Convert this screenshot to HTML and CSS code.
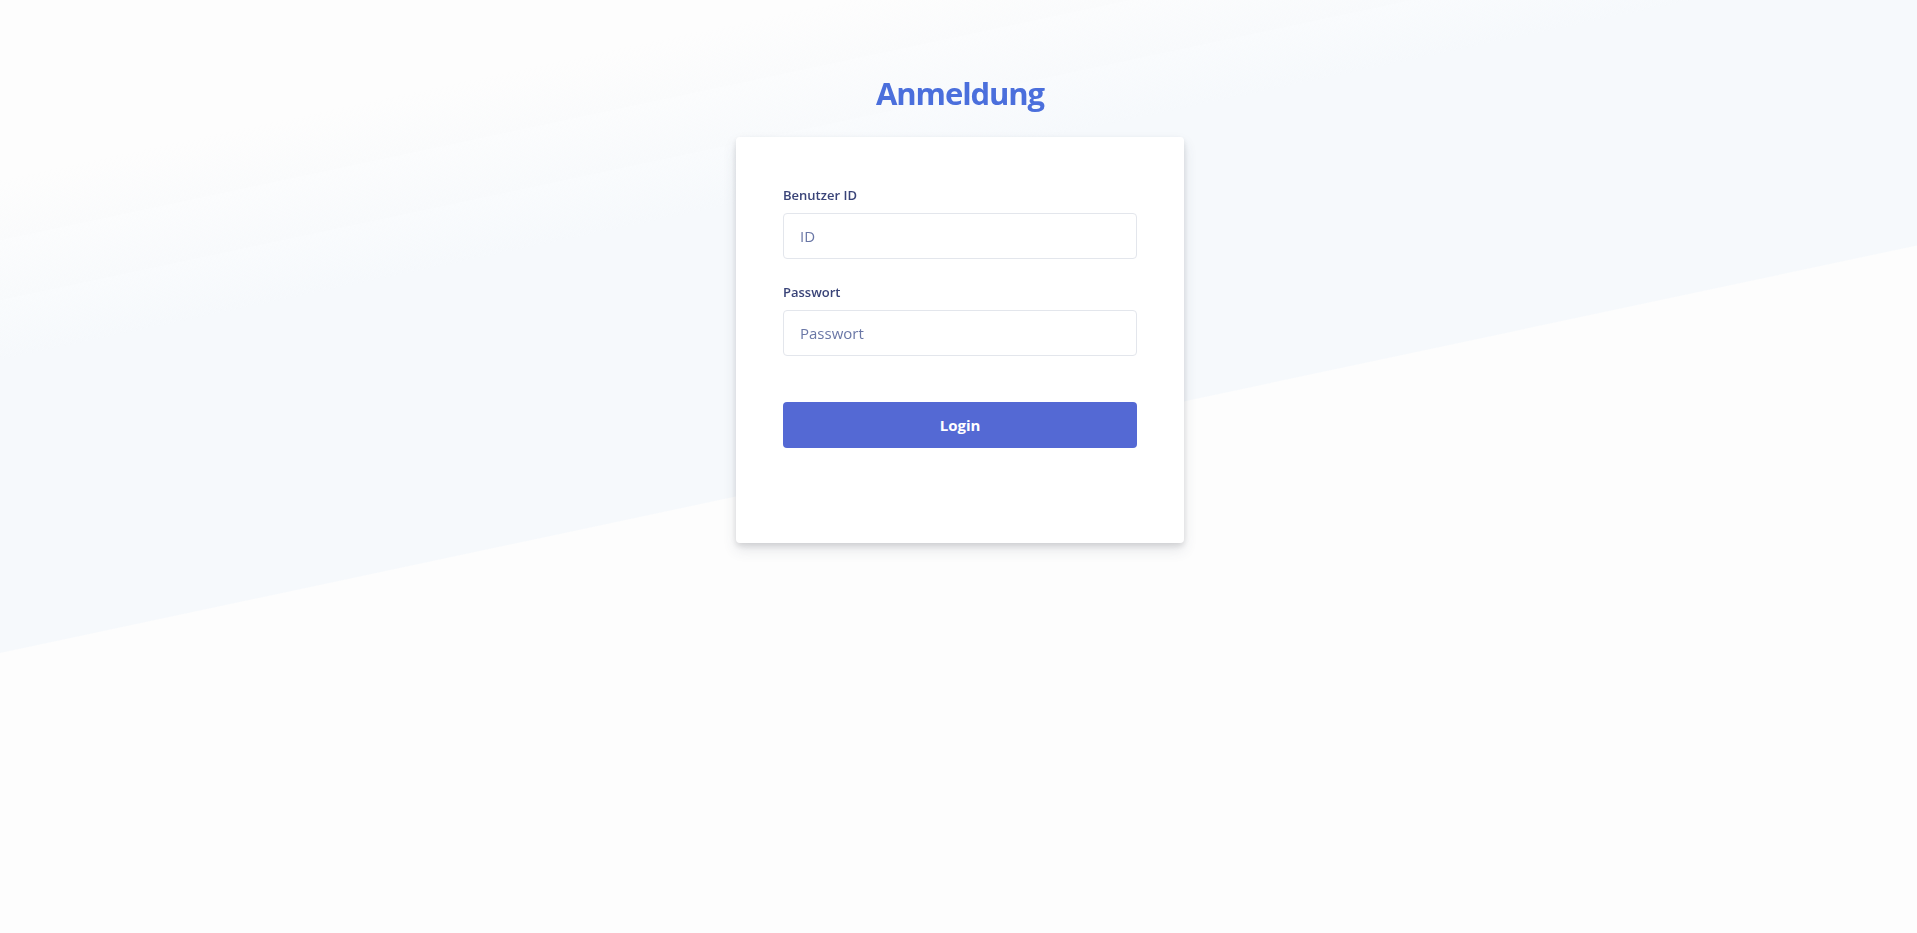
FILE: index.html
```html
<!DOCTYPE html>
<html lang="de">
<head>
<meta charset="utf-8">
<title>Anmeldung</title>
<link rel="stylesheet" href="styles.css">
</head>
<body>
<div class="bg"><div class="band"></div></div>
<main class="page">
  <h1 class="title">Anmeldung</h1>
  <form class="card">
    <div class="field">
      <label class="label" for="uid">Benutzer ID</label>
      <input class="input" id="uid" type="text" placeholder="ID">
    </div>
    <div class="field">
      <label class="label" for="pw">Passwort</label>
      <input class="input" id="pw" type="password" placeholder="Passwort">
    </div>
    <button class="btn" type="button">Login</button>
  </form>
</main>
</body>
</html>
```
FILE: styles.css
```css
* { box-sizing: border-box; }
html, body { margin: 0; height: 100%; }
body {
  background: #fdfdfd;
  font-family: "Open Sans", "Noto Sans", sans-serif;
  overflow: hidden;
}
.bg {
  position: fixed;
  inset: 0;
  z-index: 0;
  pointer-events: none;
}
.band {
  position: absolute;
  left: 0;
  top: 180px;
  width: 100%;
  height: 473px;
  transform-origin: 0 0;
  transform: skewY(-12deg);
  background: linear-gradient(to bottom, rgba(246,249,252,0) 0%, #f6f9fc 38%, #f6f9fc 100%);
}
.page {
  position: relative;
  z-index: 1;
  display: flex;
  flex-direction: column;
  align-items: center;
  padding-top: 73px;
  padding-left: 3px;
}
.title {
  margin: 0 0 24px;
  font-size: 31px;
  line-height: 40px;
  font-weight: 700;
  color: #4b6fdc;
  letter-spacing: -1.1px;
}
.card {
  width: 448px;
  padding: 48px 47px 95px;
  background: #fff;
  border-radius: 4px;
  box-shadow: rgba(60, 66, 87, 0.12) 0 7px 14px 0, rgba(0, 0, 0, 0.12) 0 3px 6px 0;
  display: flex;
  flex-direction: column;
}
.field {
  display: flex;
  flex-direction: column;
  gap: 8px;
  margin-bottom: 23px;
}
.label {
  font-size: 13px;
  line-height: 20px;
  font-weight: 600;
  color: #3a4478;
}
.input {
  height: 46px;
  border: 1px solid #e3e6ec;
  border-radius: 4px;
  padding: 0 16px;
  font-family: inherit;
  font-size: 15px;
  color: #3a4478;
  background: #fff;
  outline: none;
}
.input::placeholder { color: #6a77a6; }
.btn {
  margin-top: 23px;
  height: 46px;
  border: 0;
  border-radius: 4px;
  background: #5469d4;
  color: #fff;
  font-family: inherit;
  font-size: 15px;
  font-weight: 700;
  cursor: pointer;
}
```
